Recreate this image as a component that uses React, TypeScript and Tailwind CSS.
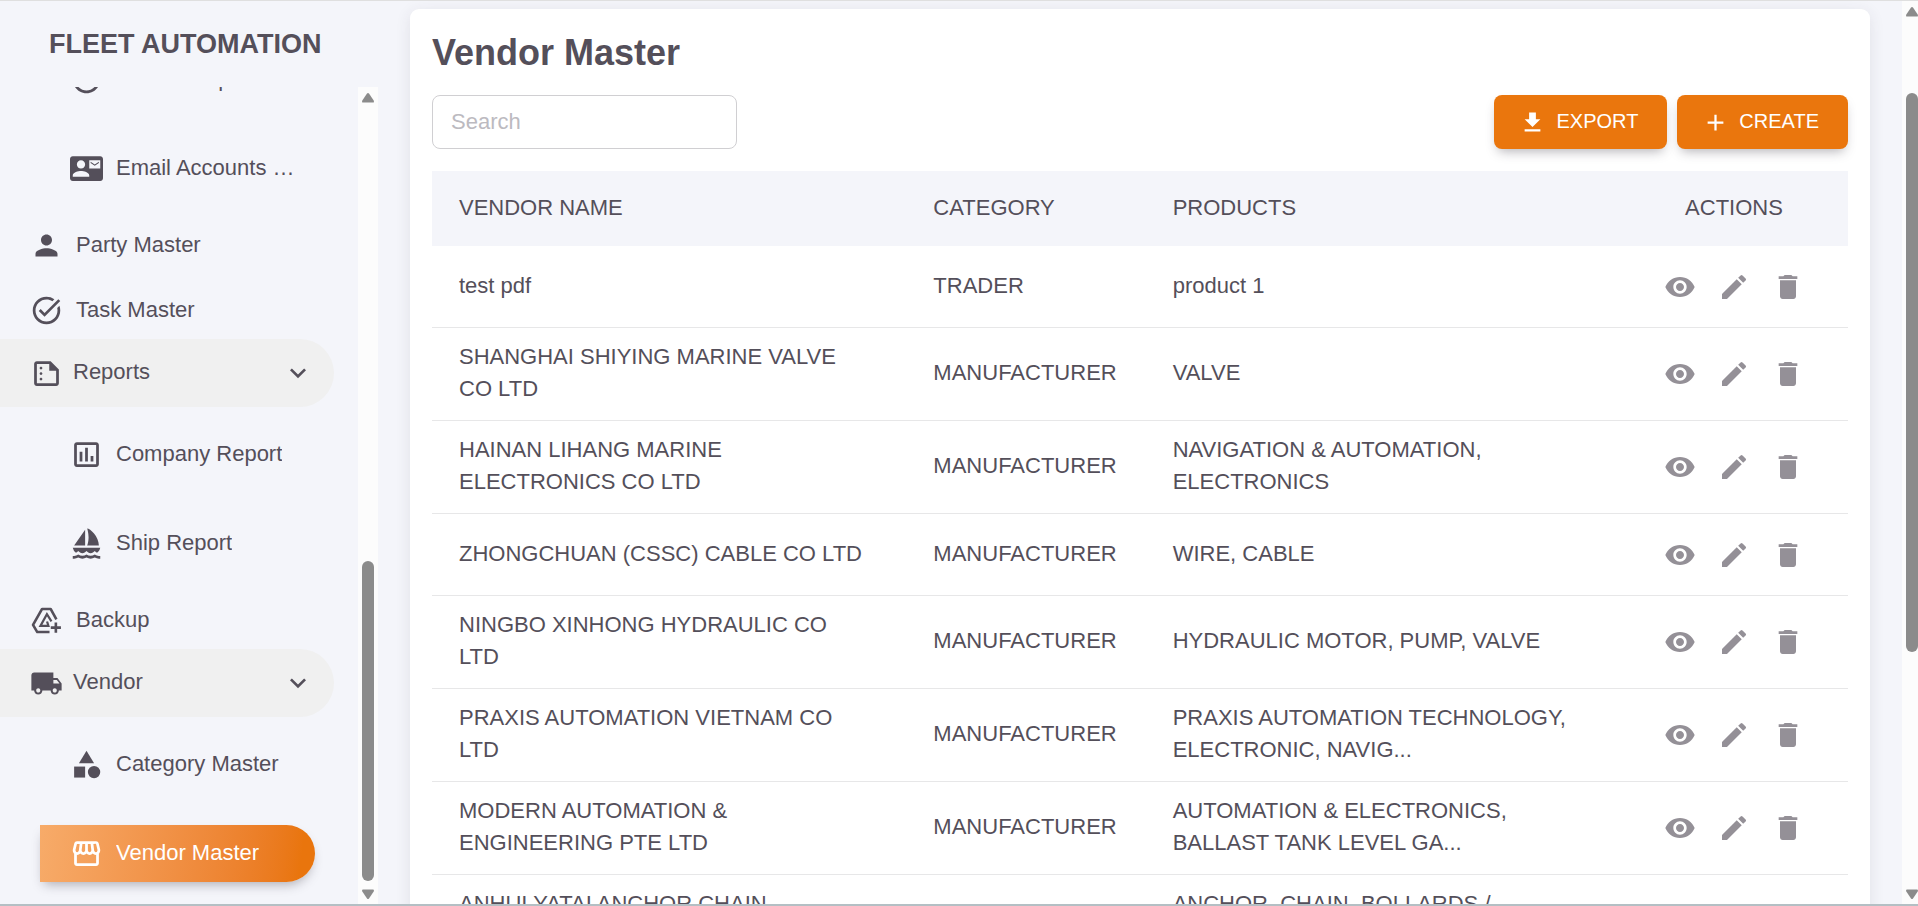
import React, { useState } from "react";
import {
  MdAccountCircle,
  MdAdd,
  MdCategory,
  MdContactMail,
  MdDelete,
  MdDownload,
  MdEdit,
  MdExpandMore,
  MdLocalShipping,
  MdOutlineAssessment,
  MdOutlineStorefront,
  MdOutlineSummarize,
  MdPerson,
  MdSailing,
  MdTaskAlt,
  MdVisibility,
} from "react-icons/md";

const vendors = [
  { name: "test pdf", category: "TRADER", products: "product 1" },
  { name: "SHANGHAI SHIYING MARINE VALVE CO LTD", category: "MANUFACTURER", products: "VALVE" },
  { name: "HAINAN LIHANG MARINE ELECTRONICS CO LTD", category: "MANUFACTURER", products: "NAVIGATION & AUTOMATION, ELECTRONICS" },
  { name: "ZHONGCHUAN (CSSC) CABLE CO LTD", category: "MANUFACTURER", products: "WIRE, CABLE" },
  { name: "NINGBO XINHONG HYDRAULIC CO LTD", category: "MANUFACTURER", products: "HYDRAULIC MOTOR, PUMP, VALVE" },
  { name: "PRAXIS AUTOMATION VIETNAM CO LTD", category: "MANUFACTURER", products: "PRAXIS AUTOMATION TECHNOLOGY, ELECTRONIC, NAVIG..." },
  { name: "MODERN AUTOMATION & ENGINEERING PTE LTD", category: "MANUFACTURER", products: "AUTOMATION & ELECTRONICS, BALLAST TANK LEVEL GA..." },
  { name: "ANHUI YATAI ANCHOR CHAIN COMPANY LTD", category: "MANUFACTURER", products: "ANCHOR, CHAIN, BOLLARDS / FAIRLEADS" },
];

type IconProps = { size?: number; className?: string };
type ItemProps = { icon: React.ComponentType<IconProps>; label: string; active?: boolean };

function BackupIcon({ size = 24, className }: IconProps) {
  return (
    <svg width={size} height={size} viewBox="0 0 24 24" fill="none" stroke="currentColor" strokeWidth="1.9" className={className}>
      <path d="M19.2 11.2 15 3.6H8.8L2.2 15.2l3.1 5.2h8.9" strokeLinejoin="round" />
      <path d="M15.6 12.6 12.3 7.4 7.6 15.9h5.8l-1-3.2" strokeWidth="1.6" />
      <path d="M18.8 13.5v7.4M15.1 17.2h7.4" />
    </svg>
  );
}

function NavLink({ icon: Icon, label }: ItemProps) {
  return (
    <a href="#" className="flex h-[57px] shrink-0 items-center gap-[13px] pl-[30px]">
      <Icon size={33} className="shrink-0" />
      <span className="pb-0.5">{label}</span>
    </a>
  );
}

function NavSubLink({ icon: Icon, label, active }: ItemProps) {
  return (
    <a
      href="#"
      className={`ml-10 mr-[43px] flex h-[57px] items-center gap-[13px] rounded-r-full pl-[30px] pr-4 ${
        active ? "bg-linear-98 from-[#f7ab69] to-[#e9750d] to-94% text-white shadow-[0_6px_12px_-4px_rgba(58,53,65,0.4)]" : ""
      }`}
    >
      <Icon size={33} className="shrink-0" />
      <span className="truncate pb-0.5">{label}</span>
    </a>
  );
}

function NavGroup({ icon: Icon, label, children }: ItemProps & { children: React.ReactNode }) {
  const [open, setOpen] = useState(true);
  return (
    <div className="shrink-0">
      <button
        type="button"
        aria-expanded={open}
        onClick={() => setOpen(!open)}
        className="flex h-[68px] w-[334px] items-center rounded-r-full bg-[#f0f0f0] pl-[30px] pr-5 text-left"
      >
        <Icon size={33} className="mr-2.5 shrink-0" />
        <span className="flex-1 pb-0.5">{label}</span>
        <MdExpandMore size={32} />
      </button>
      {open && <div className="flex flex-col gap-8 pt-[19px] pb-5">{children}</div>}
    </div>
  );
}

function Arrow({ down = false }: { down?: boolean }) {
  return (
    <svg width="12" height="10" viewBox="0 0 12 10" fill="#8b8b8b" className={down ? "rotate-180" : ""}>
      <path d="M5 .6Q6-.4 7 .6L11.7 7.6Q12.4 9.6 11 9.6H1Q-.4 9.6.3 7.6Z" />
    </svg>
  );
}

export default function App() {
  const [search, setSearch] = useState("");

  return (
    <div className="flex h-screen overflow-hidden border-t border-b-2 border-t-[#dfdfdf] border-b-[#b4bfc4] bg-[#f4f5fa] font-['Liberation_Sans',Arial,sans-serif] text-[22px] leading-8 text-[#544f5a]">
      {/* Sidebar */}
      <aside className="flex w-[378px] shrink-0 flex-col">
        <div className="flex h-[86px] shrink-0 items-center pl-[49px]">
          <span className="text-[27px] font-bold">FLEET AUTOMATION</span>
        </div>
        <div className="flex min-h-0 flex-1">
          <nav className="flex min-w-0 flex-1 flex-col justify-end overflow-hidden pb-0.5">
            <div className="flex shrink-0 flex-col gap-8 pb-5">
              <NavSubLink icon={MdAccountCircle} label="Email Template" />
              <NavSubLink icon={MdContactMail} label="Email Accounts Master" />
            </div>
            <div className="flex shrink-0 flex-col gap-2">
              <NavLink icon={MdPerson} label="Party Master" />
              <NavLink icon={MdTaskAlt} label="Task Master" />
            </div>
            <NavGroup icon={MdOutlineSummarize} label="Reports">
              <NavSubLink icon={MdOutlineAssessment} label="Company Report" />
              <NavSubLink icon={MdSailing} label="Ship Report" />
            </NavGroup>
            <NavLink icon={BackupIcon} label="Backup" />
            <NavGroup icon={MdLocalShipping} label="Vendor">
              <NavSubLink icon={MdCategory} label="Category Master" />
              <NavSubLink icon={MdOutlineStorefront} label="Vendor Master" active />
            </NavGroup>
          </nav>
          <div className="flex w-5 shrink-0 flex-col items-center bg-[#fcfcfc] pt-1.5 pb-[5px]">
            <Arrow />
            <div className="flex w-3 flex-1 flex-col justify-end py-2">
              <div className="h-[83%] max-h-80 rounded-full bg-[#8b8b8b]" />
            </div>
            <Arrow down />
          </div>
        </div>
      </aside>

      {/* Content */}
      <main className="min-w-0 flex-1 overflow-hidden pt-2 pl-8 pr-8">
        <section className="rounded-[9px] bg-white px-[22px] pt-[18px] pb-6 shadow-[0_3px_15px_rgba(58,53,65,0.1)]">
          <h1 className="mb-4 text-[36px] leading-[52px] font-bold">Vendor Master</h1>
          <div className="mb-[22px] flex items-center justify-between">
            <input
              type="text"
              aria-label="Search"
              placeholder="Search"
              value={search}
              onChange={(e) => setSearch(e.target.value)}
              className="h-[54px] w-[305px] rounded-lg border border-[#d0cfd2] px-[18px] outline-none placeholder:text-[#bcbac0]"
            />
            <div className="flex gap-2.5 text-[20px] text-white">
              <button type="button" className="flex h-[54px] items-center gap-2.5 rounded-lg bg-[#ea760d] pl-[25px] pr-[29px] shadow-[0_6px_12px_-4px_rgba(58,53,65,0.4)]">
                <MdDownload size={27} />
                <span className="pb-0.5">EXPORT</span>
              </button>
              <button type="button" className="flex h-[54px] items-center gap-2.5 rounded-lg bg-[#ea760d] pl-[25px] pr-[29px] shadow-[0_6px_12px_-4px_rgba(58,53,65,0.4)]">
                <MdAdd size={27} />
                <span className="pb-0.5">CREATE</span>
              </button>
            </div>
          </div>

          <table className="w-full table-fixed text-left">
            <thead className="bg-[#f4f5fa]">
              <tr className="h-[75px]">
                <th className="w-[33.5%] pb-0.5 pl-[27px] font-normal">VENDOR NAME</th>
                <th className="w-[16.9%] pb-0.5 pl-[27px] font-normal">CATEGORY</th>
                <th className="pb-0.5 pl-[27px] font-normal">PRODUCTS</th>
                <th className="w-[16.1%] pb-0.5 text-center font-normal">ACTIONS</th>
              </tr>
            </thead>
            <tbody>
              {vendors.map((v) => (
                <tr key={v.name} className="border-b border-[#e7e7e8]">
                  <td className="pt-[13px] pb-[15px] pl-[27px] pr-10">{v.name}</td>
                  <td className="pt-[13px] pb-[15px] pl-[27px]">{v.category}</td>
                  <td className="pt-[13px] pb-[15px] pl-[27px] pr-[27px]">{v.products}</td>
                  <td className="py-[14px]">
                    <div className="flex h-[53px] justify-center text-[#949097]">
                      <button type="button" aria-label="View" className="flex w-[54px] items-center justify-center">
                        <MdVisibility size={32} />
                      </button>
                      <button type="button" aria-label="Edit" className="flex w-[54px] items-center justify-center">
                        <MdEdit size={32} />
                      </button>
                      <button type="button" aria-label="Delete" className="flex w-[54px] items-center justify-center">
                        <MdDelete size={32} />
                      </button>
                    </div>
                  </td>
                </tr>
              ))}
            </tbody>
          </table>
        </section>
      </main>

      {/* Page scrollbar */}
      <div className="flex w-4 shrink-0 flex-col items-end bg-[#fcfcfc] pt-1.5 pb-[5px]">
        <Arrow />
        <div className="w-3 flex-1 pt-[76px] pb-2">
          <div className="h-[71%] rounded-full bg-[#8b8b8b]" />
        </div>
        <Arrow down />
      </div>
    </div>
  );
}
